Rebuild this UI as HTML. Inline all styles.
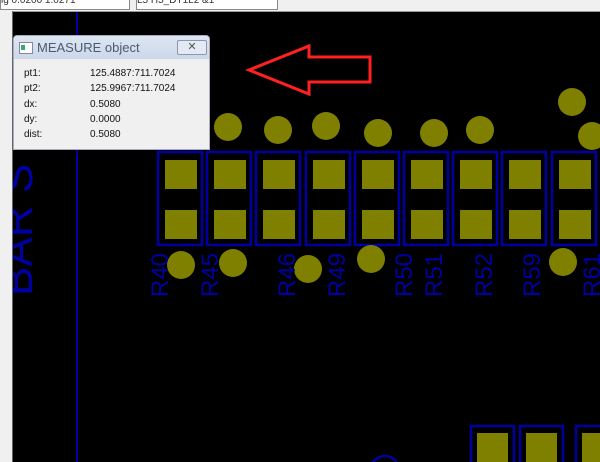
<!DOCTYPE html>
<html><head><style>
body{margin:0;width:600px;height:462px;overflow:hidden;background:#000;position:relative;font-family:"Liberation Sans",sans-serif}
.a{position:absolute}
</style></head><body>
<svg class="a" style="left:0;top:0" width="600" height="462">
<rect x="76" y="11" width="2" height="451" fill="#0000a0"/>
<g fill="none" stroke="#0000a0" stroke-width="2.5">
<rect x="158" y="152" width="44" height="93"/><rect x="207" y="152" width="44" height="93"/><rect x="256" y="152" width="44" height="93"/><rect x="306" y="152" width="44" height="93"/><rect x="355" y="152" width="44" height="93"/><rect x="404" y="152" width="44" height="93"/><rect x="453" y="152" width="44" height="93"/><rect x="502" y="152" width="44" height="93"/><rect x="552" y="152" width="44" height="93"/>
<rect x="471" y="426" width="43" height="40"/><rect x="520" y="426" width="43" height="40"/><rect x="576" y="426" width="43" height="40"/>
<circle cx="385" cy="470" r="14"/>
</g>
<g fill="#808000">
<rect x="165" y="160" width="32" height="29"/><rect x="165" y="210" width="32" height="29"/>
<rect x="214" y="160" width="32" height="29"/><rect x="214" y="210" width="32" height="29"/>
<rect x="263" y="160" width="32" height="29"/><rect x="263" y="210" width="32" height="29"/>
<rect x="313" y="160" width="32" height="29"/><rect x="313" y="210" width="32" height="29"/>
<rect x="362" y="160" width="32" height="29"/><rect x="362" y="210" width="32" height="29"/>
<rect x="411" y="160" width="32" height="29"/><rect x="411" y="210" width="32" height="29"/>
<rect x="460" y="160" width="32" height="29"/><rect x="460" y="210" width="32" height="29"/>
<rect x="509" y="160" width="32" height="29"/><rect x="509" y="210" width="32" height="29"/>
<rect x="559" y="160" width="32" height="29"/><rect x="559" y="210" width="32" height="29"/>
<rect x="477" y="433" width="31" height="30"/><rect x="526" y="433" width="31" height="30"/><rect x="582" y="433" width="31" height="30"/>
<circle cx="228" cy="127" r="14"/><circle cx="278" cy="130" r="14"/><circle cx="326" cy="126" r="14"/><circle cx="378" cy="133" r="14"/><circle cx="434" cy="133" r="14"/><circle cx="480" cy="130" r="14"/><circle cx="572" cy="102" r="14"/><circle cx="592" cy="136" r="14"/>
<circle cx="181" cy="265" r="14"/><circle cx="233" cy="263" r="14"/><circle cx="308" cy="269" r="14"/><circle cx="371" cy="259" r="14"/><circle cx="563" cy="262" r="14"/>
</g>
<g fill="#0000a0" font-family="Liberation Sans" font-size="24">
<text transform="translate(168,297) rotate(-90)">R40</text>
<text transform="translate(218,297) rotate(-90)">R45</text>
<text transform="translate(295,297) rotate(-90)">R46</text>
<text transform="translate(345,297) rotate(-90)">R49</text>
<text transform="translate(412,297) rotate(-90)">R50</text>
<text transform="translate(442,297) rotate(-90)">R51</text>
<text transform="translate(492,297) rotate(-90)">R52</text>
<text transform="translate(540,297) rotate(-90)">R59</text>
<text transform="translate(600,297) rotate(-90)">R61</text>
<text transform="translate(32,296) rotate(-90)" font-size="44">BAR S</text>
</g>
<polygon points="249,70 309,46 309,57 370,57 370,82 309,82 309,94" fill="none" stroke="#ff2020" stroke-width="3" stroke-linejoin="miter"/>
</svg>
<div class="a" style="left:0;top:0;width:600px;height:11px;background:#f0f0f0;border-bottom:1px solid #999"></div>
<div class="a" style="left:0;top:-4px;width:128px;height:12px;background:#fff;border:1px solid #888;font-size:10px;color:#333;line-height:8px">ig 0.0200 1.0271</div>
<div class="a" style="left:136px;top:-4px;width:140px;height:12px;background:#fff;border:1px solid #888;font-size:10px;color:#333;line-height:8px">L5 H5_DT1L2 &amp;1</div>
<div class="a" style="left:0;top:11px;width:12px;height:451px;background:#f0f0f0;border-right:1px solid #666"></div>
<div class="a" style="left:13px;top:35px;width:195px;height:113px;background:#f0f0f0;border:1px solid #aab;border-radius:4px 4px 0 0">
<div class="a" style="left:0;top:0;width:195px;height:23px;background:linear-gradient(#dde6f2,#cbd8ea);border-radius:4px 4px 0 0"></div>
<div class="a" style="left:5px;top:6px;width:12px;height:10px;background:#fff;border:1px solid #889"><div class="a" style="left:1px;top:2px;width:4px;height:5px;background:#3a7"></div></div>
<div class="a" style="left:23px;top:4px;font-size:13px;color:#4a5a70">MEASURE object</div>
<div class="a" style="left:163px;top:4px;width:28px;height:13px;border:1px solid #8a98ab;border-radius:2px;background:#e4eaf3;font-size:11px;line-height:13px;text-align:center;color:#555">✕</div>
<div class="a" style="left:10px;top:30px;font-size:10px;line-height:15.3px;color:#111">pt1:<br>pt2:<br>dx:<br>dy:<br>dist:</div>
<div class="a" style="left:76px;top:30px;font-size:10px;line-height:15.3px;color:#111">125.4887:711.7024<br>125.9967:711.7024<br>0.5080<br>0.0000<br>0.5080</div>
</div>
</body></html>
